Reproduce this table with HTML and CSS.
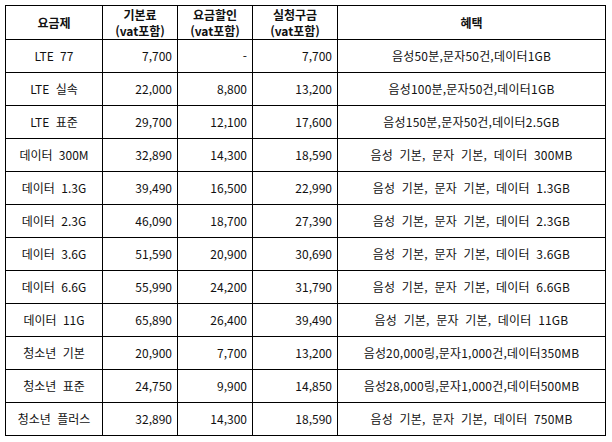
FILE: index.html
```html
<!DOCTYPE html>
<html lang="ko">
<head>
<meta charset="utf-8">
<link rel="stylesheet" href="styles.css">
</head>
<body>
<table class="plans">
  <colgroup>
    <col class="c-name"><col class="c-num"><col class="c-num"><col class="c-num2"><col class="c-ben">
  </colgroup>
  <thead>
    <tr>
      <th>요금제</th>
      <th><span class="hl">기본료</span><span class="hl">(vat포함)</span></th>
      <th><span class="hl">요금할인</span><span class="hl">(vat포함)</span></th>
      <th><span class="hl">실청구금</span><span class="hl">(vat포함)</span></th>
      <th>혜택</th>
    </tr>
  </thead>
  <tbody>
    <tr><td class="name">LTE 77</td><td class="num">7,700</td><td class="num">-</td><td class="num">7,700</td><td class="ben">음성50분,문자50건,데이터1GB</td></tr>
    <tr><td class="name">LTE 실속</td><td class="num">22,000</td><td class="num">8,800</td><td class="num">13,200</td><td class="ben">음성100분,문자50건,데이터1GB</td></tr>
    <tr><td class="name">LTE 표준</td><td class="num">29,700</td><td class="num">12,100</td><td class="num">17,600</td><td class="ben">음성150분,문자50건,데이터2.5GB</td></tr>
    <tr><td class="name">데이터 300M</td><td class="num">32,890</td><td class="num">14,300</td><td class="num">18,590</td><td class="ben">음성 기본, 문자 기본, 데이터 300MB</td></tr>
    <tr><td class="name">데이터 1.3G</td><td class="num">39,490</td><td class="num">16,500</td><td class="num">22,990</td><td class="ben">음성 기본, 문자 기본, 데이터 1.3GB</td></tr>
    <tr><td class="name">데이터 2.3G</td><td class="num">46,090</td><td class="num">18,700</td><td class="num">27,390</td><td class="ben">음성 기본, 문자 기본, 데이터 2.3GB</td></tr>
    <tr><td class="name">데이터 3.6G</td><td class="num">51,590</td><td class="num">20,900</td><td class="num">30,690</td><td class="ben">음성 기본, 문자 기본, 데이터 3.6GB</td></tr>
    <tr><td class="name">데이터 6.6G</td><td class="num">55,990</td><td class="num">24,200</td><td class="num">31,790</td><td class="ben">음성 기본, 문자 기본, 데이터 6.6GB</td></tr>
    <tr><td class="name">데이터 11G</td><td class="num">65,890</td><td class="num">26,400</td><td class="num">39,490</td><td class="ben">음성 기본, 문자 기본, 데이터 11GB</td></tr>
    <tr><td class="name">청소년 기본</td><td class="num">20,900</td><td class="num">7,700</td><td class="num">13,200</td><td class="ben">음성20,000링,문자1,000건,데이터350MB</td></tr>
    <tr><td class="name">청소년 표준</td><td class="num">24,750</td><td class="num">9,900</td><td class="num">14,850</td><td class="ben">음성28,000링,문자1,000건,데이터500MB</td></tr>
    <tr><td class="name">청소년 플러스</td><td class="num">32,890</td><td class="num">14,300</td><td class="num">18,590</td><td class="ben">음성 기본, 문자 기본, 데이터 750MB</td></tr>
  </tbody>
</table>
</body>
</html>
```
FILE: styles.css
```css
html, body {
  margin: 0;
  padding: 0;
  background: #ffffff;
}
body {
  padding: 5px 0 0 5px;
  font-family: "Noto Sans CJK KR", "Noto Sans", sans-serif;
  font-size: 12px;
  color: #111;
}
.plans {
  border-collapse: collapse;
  table-layout: fixed;
  width: 601px;
}
.c-name { width: 97px; }
.c-num { width: 75px; }
.c-num2 { width: 85px; }
.plans th, .plans td {
  border: 1px solid #000;
  padding: 0 5px;
  white-space: nowrap;
}
.plans th {
  height: 33px;
  font-weight: bold;
  line-height: 16px;
  text-align: center;
  vertical-align: middle;
}
.hl {
  display: block;
  height: 16px;
  overflow: hidden;
}
.plans td {
  height: 32px;
  line-height: 16px;
  vertical-align: middle;
}
.name, .ben {
  text-align: center;
  word-spacing: 3px;
}
.ben { letter-spacing: 0.2px; }
.num { text-align: right; }
```
